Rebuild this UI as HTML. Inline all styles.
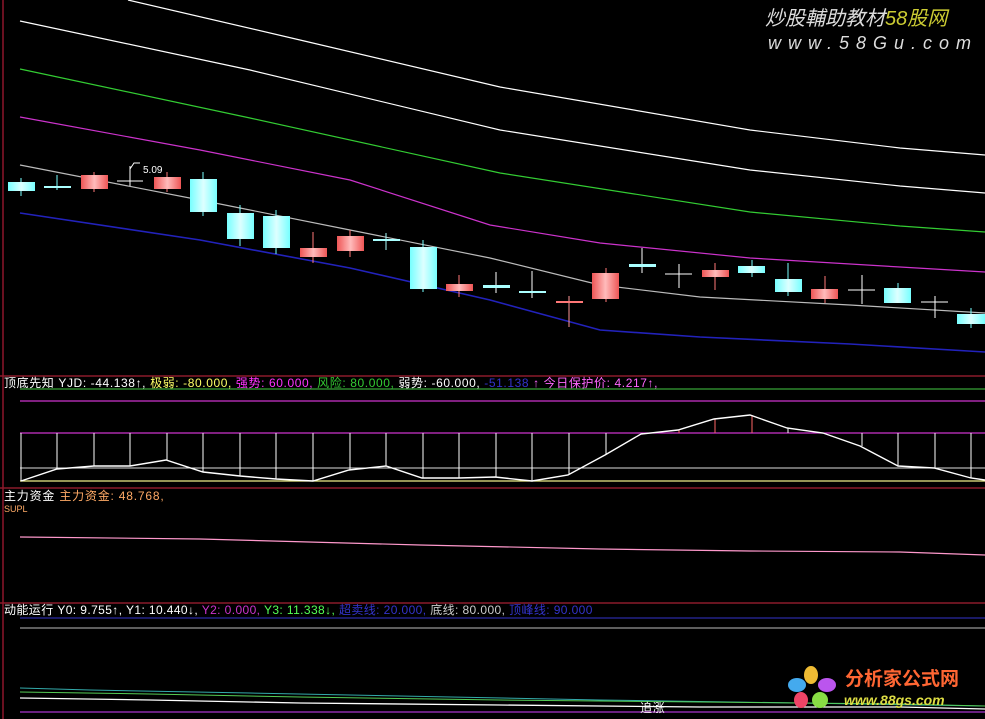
<!DOCTYPE html>
<html><head><meta charset="utf-8"><style>
html,body{margin:0;padding:0;background:#000;}
body{width:985px;height:719px;overflow:hidden;position:relative;font-family:"Liberation Sans","Noto Sans CJK SC",sans-serif;}
.t{position:absolute;font-size:12px;white-space:nowrap;line-height:12px;letter-spacing:0.8px;}
</style></head><body>
<svg width="985" height="719" style="position:absolute;left:0;top:0" xmlns="http://www.w3.org/2000/svg">
<defs>
<linearGradient id="c" x1="0" x2="1"><stop offset="0" stop-color="#7ff"/><stop offset=".5" stop-color="#dff"/><stop offset="1" stop-color="#7ff"/></linearGradient>
<linearGradient id="r" x1="0" x2="1"><stop offset="0" stop-color="#e55"/><stop offset=".5" stop-color="#fbb"/><stop offset="1" stop-color="#e55"/></linearGradient>
</defs>
<line x1="3" y1="0" x2="3" y2="719" stroke="#6a1020" stroke-width="2"/>
<g fill="none" stroke-width="1.2">
<polyline stroke="#fff" points="128,0 300,40 500,87 750,130 900,148 985,155"/>
<polyline stroke="#fff" points="20,21 250,70 500,130 750,170 900,186 985,193"/>
<polyline stroke="#3c3" points="20,69 250,118 500,173 750,212 900,226 985,232"/>
<polyline stroke="#c3c" points="20,117 200,150 350,180 490,225 600,243 750,258 900,267 985,272"/>
<polyline stroke="#bbb" points="20,165 200,200 350,230 490,258 600,285 700,297 850,305 985,313"/>
<polyline stroke="#22b" stroke-width="1.6" points="20,213 200,240 350,268 490,300 600,330 700,337 850,344 985,352"/>
</g>
<g stroke-width="1">
<line x1="21" y1="178" x2="21" y2="196" stroke="#7ff"/><rect x="8" y="182" width="27" height="9" fill="url(#c)"/>
<line x1="57" y1="175" x2="57" y2="190" stroke="#7ff"/><rect x="44" y="186" width="27" height="2" fill="#aff"/>
<line x1="94" y1="172" x2="94" y2="192" stroke="#f77"/><rect x="81" y="175" width="27" height="14" fill="url(#r)"/>
<line x1="130" y1="166" x2="130" y2="186" stroke="#fff"/><line x1="117" y1="181" x2="143" y2="181" stroke="#fff"/>
<polyline points="130,169 134,163 140,163" fill="none" stroke="#fff"/>
<line x1="167" y1="172" x2="167" y2="192" stroke="#f77"/><rect x="154" y="177" width="27" height="12" fill="url(#r)"/>
<line x1="203" y1="172" x2="203" y2="216" stroke="#7ff"/><rect x="190" y="179" width="27" height="33" fill="url(#c)"/>
<line x1="240" y1="205" x2="240" y2="246" stroke="#7ff"/><rect x="227" y="213" width="27" height="26" fill="url(#c)"/>
<line x1="276" y1="210" x2="276" y2="254" stroke="#7ff"/><rect x="263" y="216" width="27" height="32" fill="url(#c)"/>
<line x1="313" y1="232" x2="313" y2="263" stroke="#f77"/><rect x="300" y="248" width="27" height="9" fill="url(#r)"/>
<line x1="350" y1="230" x2="350" y2="257" stroke="#f77"/><rect x="337" y="236" width="27" height="15" fill="url(#r)"/>
<line x1="386" y1="233" x2="386" y2="250" stroke="#aff"/><rect x="373" y="239" width="27" height="2" fill="#aff"/>
<line x1="423" y1="240" x2="423" y2="292" stroke="#7ff"/><rect x="410" y="247" width="27" height="42" fill="url(#c)"/>
<line x1="459" y1="275" x2="459" y2="297" stroke="#f77"/><rect x="446" y="284" width="27" height="7" fill="url(#r)"/>
<line x1="496" y1="272" x2="496" y2="293" stroke="#fff"/><rect x="483" y="285" width="27" height="3" fill="#aff"/>
<line x1="532" y1="271" x2="532" y2="298" stroke="#fff"/><rect x="519" y="291" width="27" height="2" fill="#aff"/>
<line x1="569" y1="296" x2="569" y2="327" stroke="#f99"/><line x1="556" y1="302" x2="583" y2="302" stroke="#f77" stroke-width="2"/>
<line x1="606" y1="268" x2="606" y2="302" stroke="#f77"/><rect x="592" y="273" width="27" height="26" fill="url(#r)"/>
<line x1="642" y1="248" x2="642" y2="273" stroke="#fff"/><rect x="629" y="264" width="27" height="3" fill="#aff"/>
<line x1="679" y1="264" x2="679" y2="288" stroke="#fff"/><line x1="665" y1="274" x2="692" y2="274" stroke="#fff"/>
<line x1="715" y1="263" x2="715" y2="290" stroke="#f77"/><rect x="702" y="270" width="27" height="7" fill="url(#r)"/>
<line x1="752" y1="260" x2="752" y2="277" stroke="#7ff"/><rect x="738" y="266" width="27" height="7" fill="url(#c)"/>
<line x1="788" y1="263" x2="788" y2="296" stroke="#7ff"/><rect x="775" y="279" width="27" height="13" fill="url(#c)"/>
<line x1="825" y1="276" x2="825" y2="303" stroke="#f77"/><rect x="811" y="289" width="27" height="10" fill="url(#r)"/>
<line x1="862" y1="275" x2="862" y2="304" stroke="#fff"/><line x1="848" y1="290" x2="875" y2="290" stroke="#fff"/>
<line x1="898" y1="283" x2="898" y2="303" stroke="#7ff"/><rect x="884" y="288" width="27" height="15" fill="url(#c)"/>
<line x1="935" y1="296" x2="935" y2="318" stroke="#fff"/><line x1="921" y1="302" x2="948" y2="302" stroke="#fff"/>
<line x1="971" y1="308" x2="971" y2="328" stroke="#7ff"/><rect x="957" y="314" width="28" height="10" fill="url(#c)"/>
</g>
<line x1="0" y1="376" x2="985" y2="376" stroke="#8a1a2a" stroke-width="1.5"/>
<line x1="0" y1="488" x2="985" y2="488" stroke="#8a1a2a" stroke-width="1.5"/>
<line x1="0" y1="603" x2="985" y2="603" stroke="#8a1a2a" stroke-width="1.5"/>
<line x1="20" y1="389" x2="985" y2="389" stroke="#4c4"/>
<line x1="20" y1="401" x2="985" y2="401" stroke="#c3c" stroke-width="1.3"/>
<line x1="20" y1="433" x2="985" y2="433" stroke="#c3c" stroke-width="1.3"/>
<line x1="20" y1="468" x2="985" y2="468" stroke="#ddd"/>
<line x1="20" y1="481" x2="985" y2="481" stroke="#ee8" stroke-width="1.3"/>
<g stroke="#fff">
<line x1="21" y1="433" x2="21" y2="481"/><line x1="57" y1="433" x2="57" y2="469"/><line x1="94" y1="433" x2="94" y2="466"/>
<line x1="130" y1="433" x2="130" y2="466"/><line x1="167" y1="433" x2="167" y2="460"/><line x1="203" y1="433" x2="203" y2="472"/>
<line x1="240" y1="433" x2="240" y2="476"/><line x1="276" y1="433" x2="276" y2="479"/><line x1="313" y1="433" x2="313" y2="481"/>
<line x1="350" y1="433" x2="350" y2="470"/><line x1="386" y1="433" x2="386" y2="466"/><line x1="423" y1="433" x2="423" y2="478"/>
<line x1="459" y1="433" x2="459" y2="478"/><line x1="496" y1="433" x2="496" y2="477"/><line x1="532" y1="433" x2="532" y2="481"/>
<line x1="569" y1="433" x2="569" y2="475"/><line x1="606" y1="433" x2="606" y2="455"/><line x1="642" y1="433" x2="642" y2="434"/>
<line x1="788" y1="433" x2="788" y2="428"/><line x1="862" y1="433" x2="862" y2="446"/><line x1="898" y1="433" x2="898" y2="466"/>
<line x1="935" y1="433" x2="935" y2="468"/><line x1="971" y1="433" x2="971" y2="478"/>
</g>
<g stroke="#f66"><line x1="715" y1="433" x2="715" y2="419"/><line x1="752" y1="433" x2="752" y2="415"/><line x1="679" y1="433" x2="679" y2="430"/></g>
<polyline fill="none" stroke="#fff" stroke-width="1.4" points="21,481 57,469 94,466 130,466 166,460 203,472 240,476 276,479 313,481 349,470 386,466 422,478 459,478 495,477 532,481 568,475 605,455 641,434 678,430 714,419 750,415 787,428 823,433 860,446 898,466 934,468 971,478 985,480"/>
<polyline fill="none" stroke="#f9c" stroke-width="1.2" points="20,537 200,539 420,545 600,549 750,551 900,552 985,555"/>
<line x1="20" y1="618" x2="985" y2="618" stroke="#33c"/>
<line x1="20" y1="628" x2="985" y2="628" stroke="#bbb"/>
<polyline fill="none" stroke="#3aa" points="20,688 90,690 250,693 400,696 600,700 800,703 985,706"/>
<polyline fill="none" stroke="#5c5" points="20,692 150,694 300,697 500,700 700,702 900,704 985,706"/>
<polyline fill="none" stroke="#fff" stroke-width="1.3" points="20,698 150,700 300,703 500,705 700,707 900,707 985,709"/>
<line x1="20" y1="712" x2="985" y2="712" stroke="#a3c" stroke-width="1.3"/>
</svg>
<div class="t" style="left:143px;top:165px;color:#fff;font-size:10px;letter-spacing:0">5.09</div>
<div class="t" style="left:4px;top:377px;letter-spacing:0.6px"><span style="color:#fff">顶底先知</span> <span style="color:#fff">YJD: -44.138↑,</span> <span style="color:#ff6">极弱: -80.000,</span> <span style="color:#f3f">强势: 60.000,</span> <span style="color:#3c3">风险: 80.000,</span> <span style="color:#fff">弱势: -60.000,</span> <span style="color:#33c">-51.138</span> <span style="color:#f6f">↑ 今日保护价: 4.217↑,</span></div>
<div class="t" style="left:4px;top:490px;"><span style="color:#fff">主力资金</span> <span style="color:#fa6">主力资金: 48.768,</span></div>
<div class="t" style="left:4px;top:503px;color:#fa6;font-size:9px;letter-spacing:0">SUPL</div>
<div class="t" style="left:4px;top:604px;letter-spacing:0.4px"><span style="color:#fff">动能运行 Y0: 9.755↑, Y1: 10.440↓,</span> <span style="color:#c3c">Y2: 0.000,</span> <span style="color:#5f5">Y3: 11.338↓,</span> <span style="color:#33c">超卖线: 20.000,</span> <span style="color:#ccc">底线: 80.000,</span> <span style="color:#33c">顶峰线: 90.000</span></div>
<div class="t" style="left:640px;top:702px;color:#fff">追涨</div>
<div class="t" style="left:765px;top:8px;font-size:20px;line-height:22px;color:#ddd;font-style:italic;letter-spacing:0">炒股輔助教材<span style="color:#cc3">58股网</span></div>
<div class="t" style="left:768px;top:33px;font-size:18px;line-height:20px;color:#ddd;font-style:italic;letter-spacing:7px">www.58Gu.com</div>
<div style="position:absolute;left:788px;top:666px;width:48px;height:44px;">
<div style="position:absolute;left:16px;top:0;width:14px;height:18px;border-radius:50%;background:#eb3"></div>
<div style="position:absolute;left:30px;top:12px;width:18px;height:14px;border-radius:50%;background:#b5e"></div>
<div style="position:absolute;left:24px;top:26px;width:16px;height:16px;border-radius:50%;background:#8d4"></div>
<div style="position:absolute;left:6px;top:26px;width:14px;height:16px;border-radius:50%;background:#e46"></div>
<div style="position:absolute;left:0;top:12px;width:18px;height:14px;border-radius:50%;background:#4ae"></div>
</div>
<div class="t" style="left:845px;top:670px;font-size:19px;font-weight:bold;color:#f63;line-height:20px;letter-spacing:0">分析家公式网</div>
<div class="t" style="left:844px;top:694px;font-size:14px;font-weight:bold;font-style:italic;color:#dd4;letter-spacing:0">www.88gs.com</div>
</body></html>
